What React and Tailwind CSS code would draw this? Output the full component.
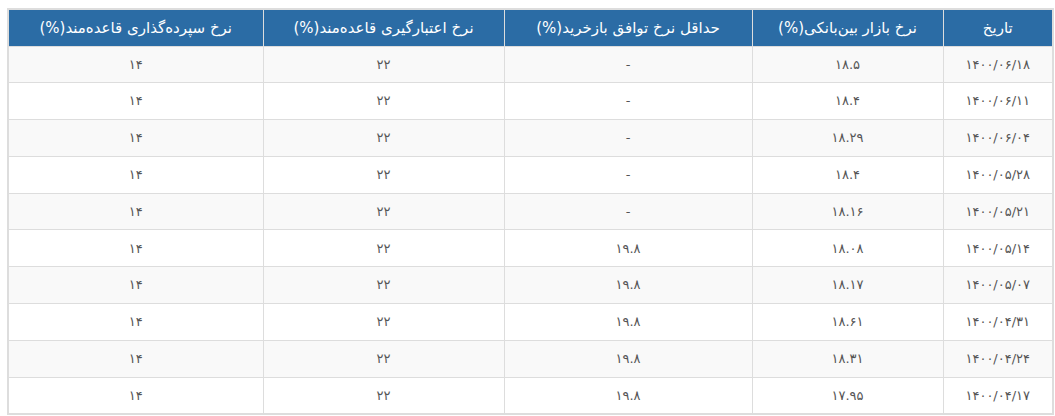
import React from 'react';

const rows = [
  ['۱۴۰۰/۰۶/۱۸', '۱۸.۵', '-', '۲۲', '۱۴'],
  ['۱۴۰۰/۰۶/۱۱', '۱۸.۴', '-', '۲۲', '۱۴'],
  ['۱۴۰۰/۰۶/۰۴', '۱۸.۲۹', '-', '۲۲', '۱۴'],
  ['۱۴۰۰/۰۵/۲۸', '۱۸.۴', '-', '۲۲', '۱۴'],
  ['۱۴۰۰/۰۵/۲۱', '۱۸.۱۶', '-', '۲۲', '۱۴'],
  ['۱۴۰۰/۰۵/۱۴', '۱۸.۰۸', '۱۹.۸', '۲۲', '۱۴'],
  ['۱۴۰۰/۰۵/۰۷', '۱۸.۱۷', '۱۹.۸', '۲۲', '۱۴'],
  ['۱۴۰۰/۰۴/۳۱', '۱۸.۶۱', '۱۹.۸', '۲۲', '۱۴'],
  ['۱۴۰۰/۰۴/۲۴', '۱۸.۳۱', '۱۹.۸', '۲۲', '۱۴'],
  ['۱۴۰۰/۰۴/۱۷', '۱۷.۹۵', '۱۹.۸', '۲۲', '۱۴'],
];

const headers = [
  'تاریخ',
  'نرخ بازار بین‌بانکی(%)',
  'حداقل نرخ توافق بازخرید(%)',
  'نرخ اعتبارگیری قاعده‌مند(%)',
  'نرخ سپرده‌گذاری قاعده‌مند(%)',
];

const widths = ['w-[110px]', 'w-[191px]', 'w-[248px]', 'w-[241px]', 'w-[255px]'];

export default function App() {
  return (
    <div className="bg-white pt-2 pl-[7px] pr-[3px] font-['DejaVu_Sans',sans-serif]">
      <table dir="rtl" className="w-[1045px] table-fixed border-collapse border-2 border-[#dddddd]">
        <colgroup>
          {widths.map((w, i) => (
            <col key={i} className={w} />
          ))}
        </colgroup>
        <thead>
          <tr className="h-[37px] bg-[#2b6ca5]">
            {headers.map((h, i) => (
              <th key={i} className="border border-[#dddddd] p-0 px-2 text-center text-[15px] font-normal text-white">
                {h}
              </th>
            ))}
          </tr>
        </thead>
        <tbody>
          {rows.map((r, i) => (
            <tr key={i} className={`h-[36.8px] ${i % 2 === 0 ? 'bg-[#f9f9f9]' : 'bg-white'}`}>
              {r.map((c, j) => (
                <td key={j} className="border border-[#dddddd] p-0 px-2 text-center text-[13px] text-[#555555]">
                  {c}
                </td>
              ))}
            </tr>
          ))}
        </tbody>
      </table>
    </div>
  );
}
